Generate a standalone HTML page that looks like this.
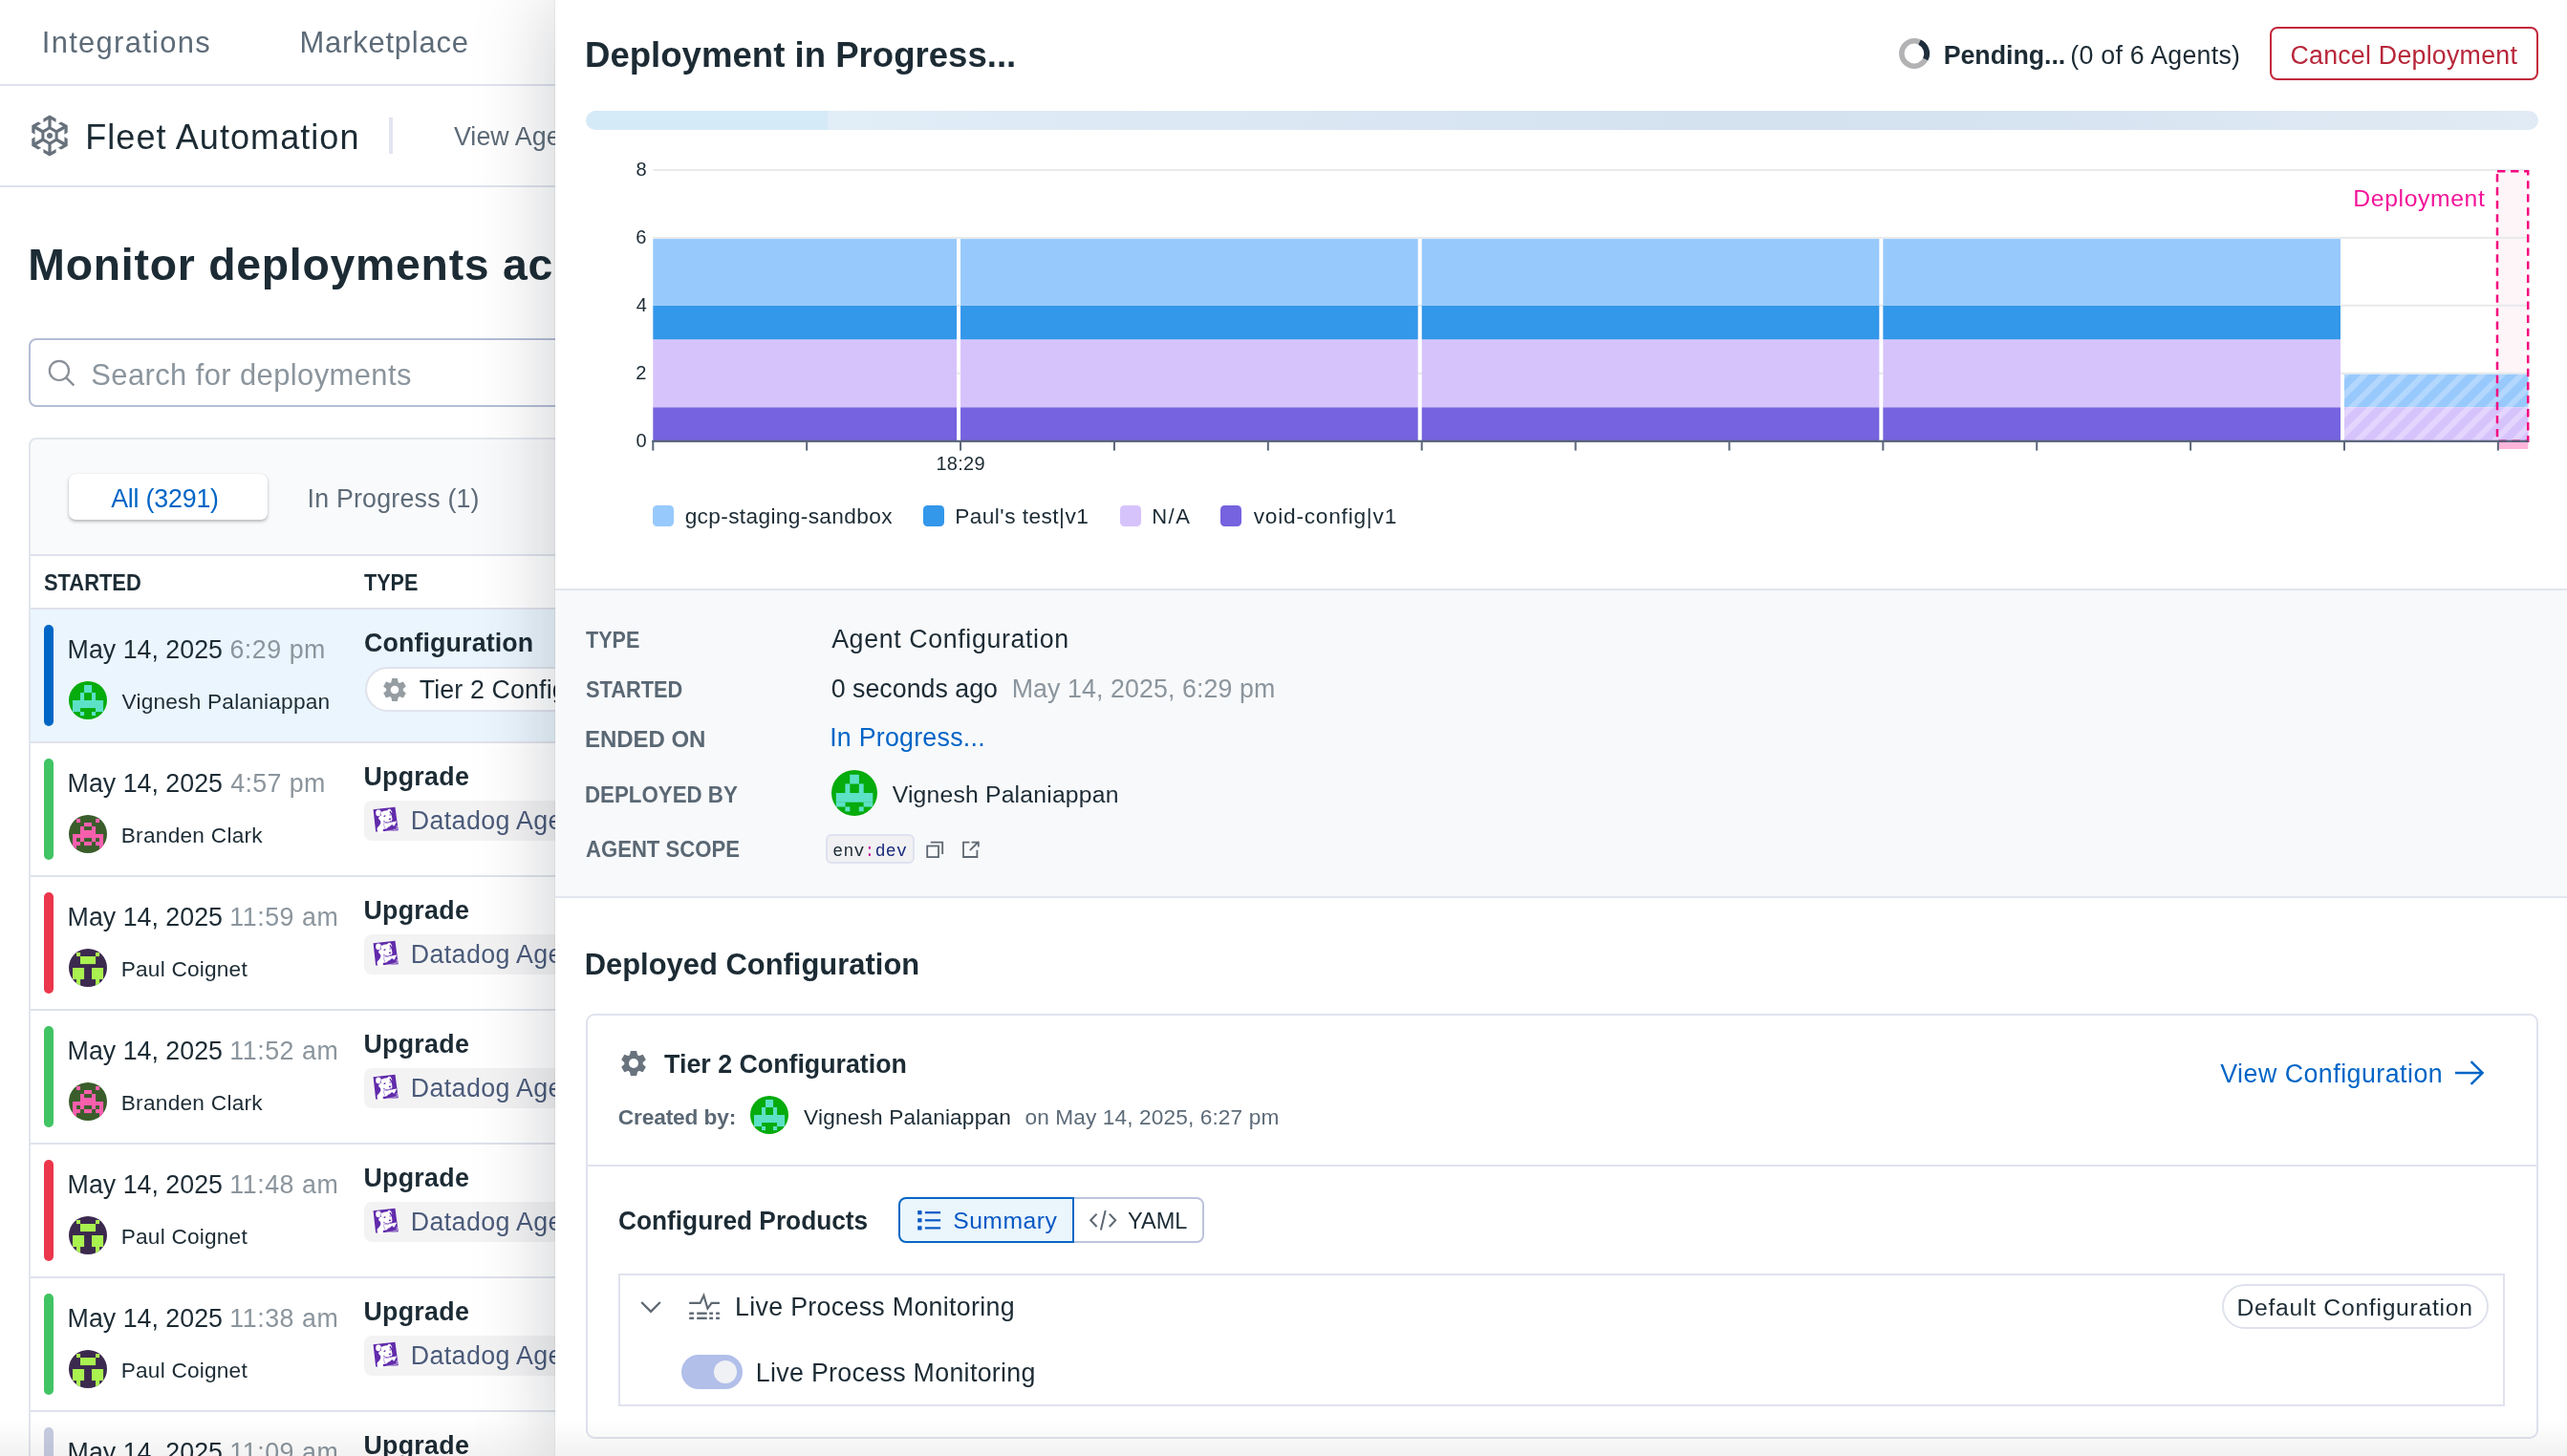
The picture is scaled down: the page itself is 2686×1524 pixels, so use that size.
<!DOCTYPE html>
<html><head><meta charset="utf-8"><title>Fleet Automation</title>
<style>
html,body{margin:0;padding:0;}
body{width:2686px;height:1524px;overflow:hidden;position:relative;background:#fff;font-family:"Liberation Sans",sans-serif;}
.t{position:absolute;white-space:nowrap;}
.b{position:absolute;}
#left{position:absolute;left:0;top:0;width:581px;height:1524px;overflow:hidden;will-change:transform;}
#panel{position:absolute;left:581px;top:0;width:2105px;height:1524px;background:#fff;box-shadow:0 0 80px rgba(8,14,28,.215);}
#pin{position:absolute;left:-581px;top:0;width:2686px;height:1524px;overflow:hidden;clip-path:inset(0 0 0 581px);will-change:transform;}
#fade{position:absolute;left:0;top:1486px;width:2686px;height:38px;background:linear-gradient(180deg,rgba(0,0,0,0),rgba(0,0,0,.05));}
</style></head><body>
<div id="left">
<div class="t" style="left:43.75px;top:29.80px;font-size:30.9px;line-height:30.9px;color:#5d6b78;letter-spacing:1.320px;">Integrations</div>
<div class="t" style="left:313.47px;top:29.80px;font-size:30.9px;line-height:30.9px;color:#5d6b78;letter-spacing:0.821px;">Marketplace</div>
<div class="b" style="left:0px;top:88px;width:700px;height:2px;background:#dfe2ec;"></div>
<svg class="b" style="left:28px;top:118px;" width="48" height="48" viewBox="-24 -24 48 48"><polygon points="0.00,-8.20 7.10,-4.10 7.10,4.10 0.00,8.20 -7.10,4.10 -7.10,-4.10" fill="none" stroke="#67717c" stroke-width="3"/><g transform="rotate(0)"><rect x="-1.6" y="-19" width="3.2" height="11" fill="#67717c"/><polygon points="0,-21.6 6.6,-17.8 6.6,-14 0,-17.8 -6.6,-14 -6.6,-17.8" fill="#67717c"/></g><g transform="rotate(60)"><rect x="-1.6" y="-19" width="3.2" height="11" fill="#67717c"/><polygon points="0,-21.6 6.6,-17.8 6.6,-14 0,-17.8 -6.6,-14 -6.6,-17.8" fill="#67717c"/></g><g transform="rotate(120)"><rect x="-1.6" y="-19" width="3.2" height="11" fill="#67717c"/><polygon points="0,-21.6 6.6,-17.8 6.6,-14 0,-17.8 -6.6,-14 -6.6,-17.8" fill="#67717c"/></g><g transform="rotate(180)"><rect x="-1.6" y="-19" width="3.2" height="11" fill="#67717c"/><polygon points="0,-21.6 6.6,-17.8 6.6,-14 0,-17.8 -6.6,-14 -6.6,-17.8" fill="#67717c"/></g><g transform="rotate(240)"><rect x="-1.6" y="-19" width="3.2" height="11" fill="#67717c"/><polygon points="0,-21.6 6.6,-17.8 6.6,-14 0,-17.8 -6.6,-14 -6.6,-17.8" fill="#67717c"/></g><g transform="rotate(300)"><rect x="-1.6" y="-19" width="3.2" height="11" fill="#67717c"/><polygon points="0,-21.6 6.6,-17.8 6.6,-14 0,-17.8 -6.6,-14 -6.6,-17.8" fill="#67717c"/></g><circle r="3" fill="#67717c"/></svg>
<div class="t" style="left:89.24px;top:125.80px;font-size:36.05px;line-height:36.05px;color:#1c2b34;letter-spacing:1.051px;">Fleet Automation</div>
<div class="b" style="left:407px;top:123px;width:4px;height:38px;background:#e2e5f0;"></div>
<div class="t" style="left:474.88px;top:129.60px;font-size:26.78px;line-height:26.78px;color:#5d6b78;letter-spacing:0.099px;">View Agents</div>
<div class="b" style="left:0px;top:194px;width:700px;height:2px;background:#dfe2ec;"></div>
<div class="t" style="left:29.30px;top:254.00px;font-size:46.35px;line-height:46.35px;color:#1c2b34;font-weight:700;letter-spacing:0.764px;">Monitor deployments account-wide</div>
<div class="b" style="left:30px;top:354px;width:700px;height:72px;box-sizing:border-box;border:2px solid #b4bdd6;border-radius:8px;background:#fff;"></div>
<svg class="b" style="left:48px;top:374px;" width="34" height="34" viewBox="0 0 34 34"><circle cx="13.9" cy="13.9" r="10.1" fill="none" stroke="#8a9099" stroke-width="2.2"/><path d="M21.3,21.3 L29.3,29.3" stroke="#8a9099" stroke-width="2.4"/></svg>
<div class="t" style="left:95.30px;top:377.50px;font-size:30.9px;line-height:30.9px;color:#8b959d;letter-spacing:0.419px;">Search for deployments</div>
<div class="b" style="left:30px;top:458px;width:700px;height:1200px;box-sizing:border-box;border:2px solid #e2e5ee;border-radius:8px;background:#f9fafb;"></div>
<div class="b" style="left:72px;top:496px;width:208px;height:48px;border-radius:7px;background:#fff;box-shadow:0 2px 3.5px rgba(0,0,0,.26),0 0 1px rgba(0,0,0,.14);"></div>
<div class="t" style="left:116.15px;top:508.50px;font-size:26.78px;line-height:26.78px;color:#0065c6;letter-spacing:-0.185px;">All (3291)</div>
<div class="t" style="left:321.53px;top:508.50px;font-size:26.78px;line-height:26.78px;color:#5d6b78;letter-spacing:0.214px;">In Progress (1)</div>
<div class="b" style="left:32px;top:580px;width:700px;height:2px;background:#dfe2ec;"></div>
<div class="b" style="left:32px;top:582px;width:700px;height:54px;background:#fff;"></div>
<div class="t" style="left:45.77px;top:598.30px;font-size:24px;line-height:24px;color:#1c2b34;font-weight:700;transform:scaleX(0.9122);transform-origin:0 0;">STARTED</div>
<div class="t" style="left:381.26px;top:598.30px;font-size:24px;line-height:24px;color:#1c2b34;font-weight:700;transform:scaleX(0.8992);transform-origin:0 0;">TYPE</div>
<div class="b" style="left:32px;top:636px;width:700px;height:2px;background:#dfe2ec;"></div>
<div class="b" style="left:32px;top:638px;width:700px;height:138px;background:#eaf5fd;"></div>
<div class="b" style="left:32px;top:776px;width:700px;height:2px;background:#dfe2ec;"></div>
<div class="b" style="left:46px;top:654px;width:10px;height:106px;background:#0066c6;border-radius:5px;"></div>
<div class="t" style="left:70.60px;top:667.30px;font-size:26.78px;line-height:26.78px;color:#1c2b34;letter-spacing:0.017px;">May 14, 2025</div>
<div class="t" style="left:240.44px;top:667.30px;font-size:26.78px;line-height:26.78px;color:#8b959d;letter-spacing:0.532px;">6:29 pm</div>
<svg class="b" style="left:72px;top:713px;" width="40" height="40" viewBox="0 0 10 10"><defs><clipPath id="avv72713"><circle cx="5" cy="5" r="5"/></clipPath></defs><g clip-path="url(#avv72713)"><rect width="10" height="10" fill="#06ab0c"/><g fill="#5ce1c6"><rect x="4" y="1" width="2.02" height="2.02"/><rect x="3" y="3" width="1.02" height="2.02"/><rect x="6" y="3" width="1.02" height="2.02"/><rect x="1" y="5" width="8.02" height="2.02"/><rect x="1" y="7" width="2.02" height="1.02"/><rect x="7" y="7" width="2.02" height="1.02"/><rect x="3" y="8" width="1.02" height="1.02"/><rect x="6" y="8" width="1.02" height="1.02"/></g></g></svg>
<div class="t" style="left:127.50px;top:723.20px;font-size:22.66px;line-height:22.66px;color:#1c2b34;letter-spacing:0.217px;">Vignesh Palaniappan</div>
<div class="t" style="left:380.90px;top:660.40px;font-size:26.78px;line-height:26.78px;color:#1c2b34;font-weight:700;letter-spacing:0.156px;">Configuration</div>
<div class="b" style="left:382px;top:698.4px;width:400px;height:47px;box-sizing:border-box;border:2px solid #e0e2ec;border-radius:24px;background:#fff;"></div>
<svg class="b" style="left:399px;top:707.9px;" width="28" height="28" viewBox="-14 -14 28 28"><g fill="#959da2"><polygon points="-2.77,-12.00 2.77,-12.00 3.69,-7.66 -3.69,-7.66" transform="rotate(0)"/><polygon points="-2.77,-12.00 2.77,-12.00 3.69,-7.66 -3.69,-7.66" transform="rotate(60)"/><polygon points="-2.77,-12.00 2.77,-12.00 3.69,-7.66 -3.69,-7.66" transform="rotate(120)"/><polygon points="-2.77,-12.00 2.77,-12.00 3.69,-7.66 -3.69,-7.66" transform="rotate(180)"/><polygon points="-2.77,-12.00 2.77,-12.00 3.69,-7.66 -3.69,-7.66" transform="rotate(240)"/><polygon points="-2.77,-12.00 2.77,-12.00 3.69,-7.66 -3.69,-7.66" transform="rotate(300)"/><circle r="8.86"/></g><circle r="4.34" fill="#fff"/></svg>
<div class="t" style="left:438.70px;top:708.80px;font-size:26.78px;line-height:26.78px;color:#1c2b34;letter-spacing:0.141px;">Tier 2 Configuration</div>
<div class="b" style="left:32px;top:778px;width:700px;height:138px;background:#fff;"></div>
<div class="b" style="left:32px;top:916px;width:700px;height:2px;background:#dfe2ec;"></div>
<div class="b" style="left:46px;top:794px;width:10px;height:106px;background:#41c464;border-radius:5px;"></div>
<div class="t" style="left:70.60px;top:807.30px;font-size:26.78px;line-height:26.78px;color:#1c2b34;letter-spacing:0.017px;">May 14, 2025</div>
<div class="t" style="left:241.19px;top:807.30px;font-size:26.78px;line-height:26.78px;color:#8b959d;letter-spacing:0.408px;">4:57 pm</div>
<svg class="b" style="left:72px;top:853px;" width="40" height="40" viewBox="0 0 10 10"><defs><clipPath id="avb72853"><circle cx="5" cy="5" r="5"/></clipPath></defs><g clip-path="url(#avb72853)"><rect width="10" height="10" fill="#3a5d2b"/><g fill="#f75fad"><rect x="2" y="1" width="1.02" height="1.02"/><rect x="7" y="1" width="1.02" height="1.02"/><rect x="4" y="2" width="2.02" height="1.02"/><rect x="3" y="3" width="1.02" height="1.02"/><rect x="6" y="3" width="1.02" height="1.02"/><rect x="3" y="4" width="4.02" height="1.02"/><rect x="1" y="5" width="8.02" height="1.02"/><rect x="1" y="6" width="1.02" height="1.02"/><rect x="3" y="6" width="1.02" height="1.02"/><rect x="6" y="6" width="1.02" height="1.02"/><rect x="8" y="6" width="1.02" height="1.02"/><rect x="1" y="7" width="2.02" height="1.02"/><rect x="4" y="7" width="2.02" height="1.02"/><rect x="7" y="7" width="2.02" height="1.02"/><rect x="1" y="8" width="1.02" height="1.02"/><rect x="8" y="8" width="1.02" height="1.02"/></g></g></svg>
<div class="t" style="left:126.74px;top:863.20px;font-size:22.66px;line-height:22.66px;color:#1c2b34;letter-spacing:0.262px;">Branden Clark</div>
<div class="t" style="left:380.39px;top:800.40px;font-size:26.78px;line-height:26.78px;color:#1c2b34;font-weight:700;letter-spacing:0.310px;">Upgrade</div>
<div class="b" style="left:381px;top:838px;width:400px;height:42px;border-radius:8px;background:#f3f3f4;"></div>
<svg class="b" style="left:389.9px;top:843.9px;" width="28" height="30" viewBox="0 0 28 30"><polygon points="0.57,3.37 23.46,0.69 26.73,25.32 3.14,26.38" fill="#612bab"/><g fill="#fff"><ellipse cx="5.95" cy="6.9" rx="2.75" ry="3.3"/><polygon points="8.74,5.24 9.91,5.66 11.55,4.66 15.28,4.26 16.45,3.09 17.43,2.72 18.90,3.56 20.47,6.53 19.72,6.83 18.67,5.12 17.73,4.66 17.73,6.64 18.90,7.81 19.77,9.68 20.23,11.78 20.47,13.65 20.00,15.10 18.83,16.03 17.15,17.03 14.82,17.34 12.95,16.92 12.13,17.62 11.78,19.95 12.95,22.99 13.88,23.69 11.08,23.69 10.85,25.79 10.38,27.66 8.74,28.01 6.88,27.43 5.24,26.49 4.54,24.62 4.77,22.29 6.88,20.19 8.39,17.62 8.16,15.28 5.94,12.71 6.88,10.61 8.74,9.68"/><polygon points="12.13,17.15 14.35,17.38 17.62,17.10 24.62,15.56 24.97,16.10 22.99,19.72 22.17,20.65 20.19,19.07 19.02,20.07 17.62,21.35 16.10,21.71 14.58,23.46 12.95,22.99 11.78,19.95"/></g><ellipse cx="12.5" cy="10.15" rx="1.15" ry="0.75" fill="#612bab" transform="rotate(-30 12.5 10.15)"/><ellipse cx="18.1" cy="9" rx="0.6" ry="0.75" fill="#612bab"/><ellipse cx="18.1" cy="13.2" rx="1.3" ry="0.75" fill="#612bab" transform="rotate(-8 18.1 13.2)"/><polyline points="11.08,15.05 13.41,16.45 15.98,17.03 17.62,16.22 18.67,15.40" fill="none" stroke="#612bab" stroke-width="0.75"/><polyline points="8.04,6.88 8.09,9.68" fill="none" stroke="#612bab" stroke-width="0.6" opacity="0.7"/><polyline points="11.90,16.22 11.55,19.02 12.48,22.29" fill="none" stroke="#612bab" stroke-width="0.55" opacity="0.6"/><polyline points="18.0,13.9 18.3,15.6" fill="none" stroke="#612bab" stroke-width="0.5" opacity="0.7"/><polyline points="24.97,19.95 25.37,23.97 21.35,24.44" fill="none" stroke="#fff" stroke-width="0.7" opacity="0.85"/><polyline points="20.89,24.97 13.41,26.26" fill="none" stroke="#fff" stroke-width="0.7" opacity="0.7"/></svg>
<div class="t" style="left:429.80px;top:845.70px;font-size:26.78px;line-height:26.78px;color:#4b5b7a;letter-spacing:0.389px;">Datadog Agent</div>
<div class="b" style="left:32px;top:918px;width:700px;height:138px;background:#fff;"></div>
<div class="b" style="left:32px;top:1056px;width:700px;height:2px;background:#dfe2ec;"></div>
<div class="b" style="left:46px;top:934px;width:10px;height:106px;background:#eb364b;border-radius:5px;"></div>
<div class="t" style="left:70.60px;top:947.30px;font-size:26.78px;line-height:26.78px;color:#1c2b34;letter-spacing:0.017px;">May 14, 2025</div>
<div class="t" style="left:240.26px;top:947.30px;font-size:26.78px;line-height:26.78px;color:#8b959d;letter-spacing:0.552px;">11:59 am</div>
<svg class="b" style="left:72px;top:993px;" width="40" height="40" viewBox="0 0 10 10"><defs><clipPath id="avp72993"><circle cx="5" cy="5" r="5"/></clipPath></defs><g clip-path="url(#avp72993)"><rect width="10" height="10" fill="#3c294e"/><g fill="#a9f250"><rect x="2" y="1" width="1.02" height="1.02"/><rect x="7" y="1" width="1.02" height="1.02"/><rect x="3" y="2" width="4.02" height="2.02"/><rect x="1" y="5" width="3.02" height="3.02"/><rect x="6" y="5" width="3.02" height="3.02"/><rect x="2" y="8" width="1.02" height="2.02"/><rect x="7" y="8" width="1.02" height="2.02"/></g></g></svg>
<div class="t" style="left:126.74px;top:1003.20px;font-size:22.66px;line-height:22.66px;color:#1c2b34;letter-spacing:0.203px;">Paul Coignet</div>
<div class="t" style="left:380.39px;top:940.40px;font-size:26.78px;line-height:26.78px;color:#1c2b34;font-weight:700;letter-spacing:0.310px;">Upgrade</div>
<div class="b" style="left:381px;top:978px;width:400px;height:42px;border-radius:8px;background:#f3f3f4;"></div>
<svg class="b" style="left:389.9px;top:983.9px;" width="28" height="30" viewBox="0 0 28 30"><polygon points="0.57,3.37 23.46,0.69 26.73,25.32 3.14,26.38" fill="#612bab"/><g fill="#fff"><ellipse cx="5.95" cy="6.9" rx="2.75" ry="3.3"/><polygon points="8.74,5.24 9.91,5.66 11.55,4.66 15.28,4.26 16.45,3.09 17.43,2.72 18.90,3.56 20.47,6.53 19.72,6.83 18.67,5.12 17.73,4.66 17.73,6.64 18.90,7.81 19.77,9.68 20.23,11.78 20.47,13.65 20.00,15.10 18.83,16.03 17.15,17.03 14.82,17.34 12.95,16.92 12.13,17.62 11.78,19.95 12.95,22.99 13.88,23.69 11.08,23.69 10.85,25.79 10.38,27.66 8.74,28.01 6.88,27.43 5.24,26.49 4.54,24.62 4.77,22.29 6.88,20.19 8.39,17.62 8.16,15.28 5.94,12.71 6.88,10.61 8.74,9.68"/><polygon points="12.13,17.15 14.35,17.38 17.62,17.10 24.62,15.56 24.97,16.10 22.99,19.72 22.17,20.65 20.19,19.07 19.02,20.07 17.62,21.35 16.10,21.71 14.58,23.46 12.95,22.99 11.78,19.95"/></g><ellipse cx="12.5" cy="10.15" rx="1.15" ry="0.75" fill="#612bab" transform="rotate(-30 12.5 10.15)"/><ellipse cx="18.1" cy="9" rx="0.6" ry="0.75" fill="#612bab"/><ellipse cx="18.1" cy="13.2" rx="1.3" ry="0.75" fill="#612bab" transform="rotate(-8 18.1 13.2)"/><polyline points="11.08,15.05 13.41,16.45 15.98,17.03 17.62,16.22 18.67,15.40" fill="none" stroke="#612bab" stroke-width="0.75"/><polyline points="8.04,6.88 8.09,9.68" fill="none" stroke="#612bab" stroke-width="0.6" opacity="0.7"/><polyline points="11.90,16.22 11.55,19.02 12.48,22.29" fill="none" stroke="#612bab" stroke-width="0.55" opacity="0.6"/><polyline points="18.0,13.9 18.3,15.6" fill="none" stroke="#612bab" stroke-width="0.5" opacity="0.7"/><polyline points="24.97,19.95 25.37,23.97 21.35,24.44" fill="none" stroke="#fff" stroke-width="0.7" opacity="0.85"/><polyline points="20.89,24.97 13.41,26.26" fill="none" stroke="#fff" stroke-width="0.7" opacity="0.7"/></svg>
<div class="t" style="left:429.80px;top:985.70px;font-size:26.78px;line-height:26.78px;color:#4b5b7a;letter-spacing:0.389px;">Datadog Agent</div>
<div class="b" style="left:32px;top:1058px;width:700px;height:138px;background:#fff;"></div>
<div class="b" style="left:32px;top:1196px;width:700px;height:2px;background:#dfe2ec;"></div>
<div class="b" style="left:46px;top:1074px;width:10px;height:106px;background:#41c464;border-radius:5px;"></div>
<div class="t" style="left:70.60px;top:1087.30px;font-size:26.78px;line-height:26.78px;color:#1c2b34;letter-spacing:0.017px;">May 14, 2025</div>
<div class="t" style="left:240.26px;top:1087.30px;font-size:26.78px;line-height:26.78px;color:#8b959d;letter-spacing:0.552px;">11:52 am</div>
<svg class="b" style="left:72px;top:1133px;" width="40" height="40" viewBox="0 0 10 10"><defs><clipPath id="avb721133"><circle cx="5" cy="5" r="5"/></clipPath></defs><g clip-path="url(#avb721133)"><rect width="10" height="10" fill="#3a5d2b"/><g fill="#f75fad"><rect x="2" y="1" width="1.02" height="1.02"/><rect x="7" y="1" width="1.02" height="1.02"/><rect x="4" y="2" width="2.02" height="1.02"/><rect x="3" y="3" width="1.02" height="1.02"/><rect x="6" y="3" width="1.02" height="1.02"/><rect x="3" y="4" width="4.02" height="1.02"/><rect x="1" y="5" width="8.02" height="1.02"/><rect x="1" y="6" width="1.02" height="1.02"/><rect x="3" y="6" width="1.02" height="1.02"/><rect x="6" y="6" width="1.02" height="1.02"/><rect x="8" y="6" width="1.02" height="1.02"/><rect x="1" y="7" width="2.02" height="1.02"/><rect x="4" y="7" width="2.02" height="1.02"/><rect x="7" y="7" width="2.02" height="1.02"/><rect x="1" y="8" width="1.02" height="1.02"/><rect x="8" y="8" width="1.02" height="1.02"/></g></g></svg>
<div class="t" style="left:126.74px;top:1143.20px;font-size:22.66px;line-height:22.66px;color:#1c2b34;letter-spacing:0.262px;">Branden Clark</div>
<div class="t" style="left:380.39px;top:1080.40px;font-size:26.78px;line-height:26.78px;color:#1c2b34;font-weight:700;letter-spacing:0.310px;">Upgrade</div>
<div class="b" style="left:381px;top:1118px;width:400px;height:42px;border-radius:8px;background:#f3f3f4;"></div>
<svg class="b" style="left:389.9px;top:1123.9px;" width="28" height="30" viewBox="0 0 28 30"><polygon points="0.57,3.37 23.46,0.69 26.73,25.32 3.14,26.38" fill="#612bab"/><g fill="#fff"><ellipse cx="5.95" cy="6.9" rx="2.75" ry="3.3"/><polygon points="8.74,5.24 9.91,5.66 11.55,4.66 15.28,4.26 16.45,3.09 17.43,2.72 18.90,3.56 20.47,6.53 19.72,6.83 18.67,5.12 17.73,4.66 17.73,6.64 18.90,7.81 19.77,9.68 20.23,11.78 20.47,13.65 20.00,15.10 18.83,16.03 17.15,17.03 14.82,17.34 12.95,16.92 12.13,17.62 11.78,19.95 12.95,22.99 13.88,23.69 11.08,23.69 10.85,25.79 10.38,27.66 8.74,28.01 6.88,27.43 5.24,26.49 4.54,24.62 4.77,22.29 6.88,20.19 8.39,17.62 8.16,15.28 5.94,12.71 6.88,10.61 8.74,9.68"/><polygon points="12.13,17.15 14.35,17.38 17.62,17.10 24.62,15.56 24.97,16.10 22.99,19.72 22.17,20.65 20.19,19.07 19.02,20.07 17.62,21.35 16.10,21.71 14.58,23.46 12.95,22.99 11.78,19.95"/></g><ellipse cx="12.5" cy="10.15" rx="1.15" ry="0.75" fill="#612bab" transform="rotate(-30 12.5 10.15)"/><ellipse cx="18.1" cy="9" rx="0.6" ry="0.75" fill="#612bab"/><ellipse cx="18.1" cy="13.2" rx="1.3" ry="0.75" fill="#612bab" transform="rotate(-8 18.1 13.2)"/><polyline points="11.08,15.05 13.41,16.45 15.98,17.03 17.62,16.22 18.67,15.40" fill="none" stroke="#612bab" stroke-width="0.75"/><polyline points="8.04,6.88 8.09,9.68" fill="none" stroke="#612bab" stroke-width="0.6" opacity="0.7"/><polyline points="11.90,16.22 11.55,19.02 12.48,22.29" fill="none" stroke="#612bab" stroke-width="0.55" opacity="0.6"/><polyline points="18.0,13.9 18.3,15.6" fill="none" stroke="#612bab" stroke-width="0.5" opacity="0.7"/><polyline points="24.97,19.95 25.37,23.97 21.35,24.44" fill="none" stroke="#fff" stroke-width="0.7" opacity="0.85"/><polyline points="20.89,24.97 13.41,26.26" fill="none" stroke="#fff" stroke-width="0.7" opacity="0.7"/></svg>
<div class="t" style="left:429.80px;top:1125.70px;font-size:26.78px;line-height:26.78px;color:#4b5b7a;letter-spacing:0.389px;">Datadog Agent</div>
<div class="b" style="left:32px;top:1198px;width:700px;height:138px;background:#fff;"></div>
<div class="b" style="left:32px;top:1336px;width:700px;height:2px;background:#dfe2ec;"></div>
<div class="b" style="left:46px;top:1214px;width:10px;height:106px;background:#eb364b;border-radius:5px;"></div>
<div class="t" style="left:70.60px;top:1227.30px;font-size:26.78px;line-height:26.78px;color:#1c2b34;letter-spacing:0.017px;">May 14, 2025</div>
<div class="t" style="left:240.26px;top:1227.30px;font-size:26.78px;line-height:26.78px;color:#8b959d;letter-spacing:0.552px;">11:48 am</div>
<svg class="b" style="left:72px;top:1273px;" width="40" height="40" viewBox="0 0 10 10"><defs><clipPath id="avp721273"><circle cx="5" cy="5" r="5"/></clipPath></defs><g clip-path="url(#avp721273)"><rect width="10" height="10" fill="#3c294e"/><g fill="#a9f250"><rect x="2" y="1" width="1.02" height="1.02"/><rect x="7" y="1" width="1.02" height="1.02"/><rect x="3" y="2" width="4.02" height="2.02"/><rect x="1" y="5" width="3.02" height="3.02"/><rect x="6" y="5" width="3.02" height="3.02"/><rect x="2" y="8" width="1.02" height="2.02"/><rect x="7" y="8" width="1.02" height="2.02"/></g></g></svg>
<div class="t" style="left:126.74px;top:1283.20px;font-size:22.66px;line-height:22.66px;color:#1c2b34;letter-spacing:0.203px;">Paul Coignet</div>
<div class="t" style="left:380.39px;top:1220.40px;font-size:26.78px;line-height:26.78px;color:#1c2b34;font-weight:700;letter-spacing:0.310px;">Upgrade</div>
<div class="b" style="left:381px;top:1258px;width:400px;height:42px;border-radius:8px;background:#f3f3f4;"></div>
<svg class="b" style="left:389.9px;top:1263.9px;" width="28" height="30" viewBox="0 0 28 30"><polygon points="0.57,3.37 23.46,0.69 26.73,25.32 3.14,26.38" fill="#612bab"/><g fill="#fff"><ellipse cx="5.95" cy="6.9" rx="2.75" ry="3.3"/><polygon points="8.74,5.24 9.91,5.66 11.55,4.66 15.28,4.26 16.45,3.09 17.43,2.72 18.90,3.56 20.47,6.53 19.72,6.83 18.67,5.12 17.73,4.66 17.73,6.64 18.90,7.81 19.77,9.68 20.23,11.78 20.47,13.65 20.00,15.10 18.83,16.03 17.15,17.03 14.82,17.34 12.95,16.92 12.13,17.62 11.78,19.95 12.95,22.99 13.88,23.69 11.08,23.69 10.85,25.79 10.38,27.66 8.74,28.01 6.88,27.43 5.24,26.49 4.54,24.62 4.77,22.29 6.88,20.19 8.39,17.62 8.16,15.28 5.94,12.71 6.88,10.61 8.74,9.68"/><polygon points="12.13,17.15 14.35,17.38 17.62,17.10 24.62,15.56 24.97,16.10 22.99,19.72 22.17,20.65 20.19,19.07 19.02,20.07 17.62,21.35 16.10,21.71 14.58,23.46 12.95,22.99 11.78,19.95"/></g><ellipse cx="12.5" cy="10.15" rx="1.15" ry="0.75" fill="#612bab" transform="rotate(-30 12.5 10.15)"/><ellipse cx="18.1" cy="9" rx="0.6" ry="0.75" fill="#612bab"/><ellipse cx="18.1" cy="13.2" rx="1.3" ry="0.75" fill="#612bab" transform="rotate(-8 18.1 13.2)"/><polyline points="11.08,15.05 13.41,16.45 15.98,17.03 17.62,16.22 18.67,15.40" fill="none" stroke="#612bab" stroke-width="0.75"/><polyline points="8.04,6.88 8.09,9.68" fill="none" stroke="#612bab" stroke-width="0.6" opacity="0.7"/><polyline points="11.90,16.22 11.55,19.02 12.48,22.29" fill="none" stroke="#612bab" stroke-width="0.55" opacity="0.6"/><polyline points="18.0,13.9 18.3,15.6" fill="none" stroke="#612bab" stroke-width="0.5" opacity="0.7"/><polyline points="24.97,19.95 25.37,23.97 21.35,24.44" fill="none" stroke="#fff" stroke-width="0.7" opacity="0.85"/><polyline points="20.89,24.97 13.41,26.26" fill="none" stroke="#fff" stroke-width="0.7" opacity="0.7"/></svg>
<div class="t" style="left:429.80px;top:1265.70px;font-size:26.78px;line-height:26.78px;color:#4b5b7a;letter-spacing:0.389px;">Datadog Agent</div>
<div class="b" style="left:32px;top:1338px;width:700px;height:138px;background:#fff;"></div>
<div class="b" style="left:32px;top:1476px;width:700px;height:2px;background:#dfe2ec;"></div>
<div class="b" style="left:46px;top:1354px;width:10px;height:106px;background:#41c464;border-radius:5px;"></div>
<div class="t" style="left:70.60px;top:1367.30px;font-size:26.78px;line-height:26.78px;color:#1c2b34;letter-spacing:0.017px;">May 14, 2025</div>
<div class="t" style="left:240.26px;top:1367.30px;font-size:26.78px;line-height:26.78px;color:#8b959d;letter-spacing:0.552px;">11:38 am</div>
<svg class="b" style="left:72px;top:1413px;" width="40" height="40" viewBox="0 0 10 10"><defs><clipPath id="avp721413"><circle cx="5" cy="5" r="5"/></clipPath></defs><g clip-path="url(#avp721413)"><rect width="10" height="10" fill="#3c294e"/><g fill="#a9f250"><rect x="2" y="1" width="1.02" height="1.02"/><rect x="7" y="1" width="1.02" height="1.02"/><rect x="3" y="2" width="4.02" height="2.02"/><rect x="1" y="5" width="3.02" height="3.02"/><rect x="6" y="5" width="3.02" height="3.02"/><rect x="2" y="8" width="1.02" height="2.02"/><rect x="7" y="8" width="1.02" height="2.02"/></g></g></svg>
<div class="t" style="left:126.74px;top:1423.20px;font-size:22.66px;line-height:22.66px;color:#1c2b34;letter-spacing:0.203px;">Paul Coignet</div>
<div class="t" style="left:380.39px;top:1360.40px;font-size:26.78px;line-height:26.78px;color:#1c2b34;font-weight:700;letter-spacing:0.310px;">Upgrade</div>
<div class="b" style="left:381px;top:1398px;width:400px;height:42px;border-radius:8px;background:#f3f3f4;"></div>
<svg class="b" style="left:389.9px;top:1403.9px;" width="28" height="30" viewBox="0 0 28 30"><polygon points="0.57,3.37 23.46,0.69 26.73,25.32 3.14,26.38" fill="#612bab"/><g fill="#fff"><ellipse cx="5.95" cy="6.9" rx="2.75" ry="3.3"/><polygon points="8.74,5.24 9.91,5.66 11.55,4.66 15.28,4.26 16.45,3.09 17.43,2.72 18.90,3.56 20.47,6.53 19.72,6.83 18.67,5.12 17.73,4.66 17.73,6.64 18.90,7.81 19.77,9.68 20.23,11.78 20.47,13.65 20.00,15.10 18.83,16.03 17.15,17.03 14.82,17.34 12.95,16.92 12.13,17.62 11.78,19.95 12.95,22.99 13.88,23.69 11.08,23.69 10.85,25.79 10.38,27.66 8.74,28.01 6.88,27.43 5.24,26.49 4.54,24.62 4.77,22.29 6.88,20.19 8.39,17.62 8.16,15.28 5.94,12.71 6.88,10.61 8.74,9.68"/><polygon points="12.13,17.15 14.35,17.38 17.62,17.10 24.62,15.56 24.97,16.10 22.99,19.72 22.17,20.65 20.19,19.07 19.02,20.07 17.62,21.35 16.10,21.71 14.58,23.46 12.95,22.99 11.78,19.95"/></g><ellipse cx="12.5" cy="10.15" rx="1.15" ry="0.75" fill="#612bab" transform="rotate(-30 12.5 10.15)"/><ellipse cx="18.1" cy="9" rx="0.6" ry="0.75" fill="#612bab"/><ellipse cx="18.1" cy="13.2" rx="1.3" ry="0.75" fill="#612bab" transform="rotate(-8 18.1 13.2)"/><polyline points="11.08,15.05 13.41,16.45 15.98,17.03 17.62,16.22 18.67,15.40" fill="none" stroke="#612bab" stroke-width="0.75"/><polyline points="8.04,6.88 8.09,9.68" fill="none" stroke="#612bab" stroke-width="0.6" opacity="0.7"/><polyline points="11.90,16.22 11.55,19.02 12.48,22.29" fill="none" stroke="#612bab" stroke-width="0.55" opacity="0.6"/><polyline points="18.0,13.9 18.3,15.6" fill="none" stroke="#612bab" stroke-width="0.5" opacity="0.7"/><polyline points="24.97,19.95 25.37,23.97 21.35,24.44" fill="none" stroke="#fff" stroke-width="0.7" opacity="0.85"/><polyline points="20.89,24.97 13.41,26.26" fill="none" stroke="#fff" stroke-width="0.7" opacity="0.7"/></svg>
<div class="t" style="left:429.80px;top:1405.70px;font-size:26.78px;line-height:26.78px;color:#4b5b7a;letter-spacing:0.389px;">Datadog Agent</div>
<div class="b" style="left:32px;top:1478px;width:700px;height:138px;background:#fff;"></div>
<div class="b" style="left:32px;top:1616px;width:700px;height:2px;background:#dfe2ec;"></div>
<div class="b" style="left:46px;top:1494px;width:10px;height:106px;background:#c8cde2;border-radius:5px;"></div>
<div class="t" style="left:70.60px;top:1507.30px;font-size:26.78px;line-height:26.78px;color:#1c2b34;letter-spacing:0.017px;">May 14, 2025</div>
<div class="t" style="left:240.26px;top:1507.30px;font-size:26.78px;line-height:26.78px;color:#8b959d;letter-spacing:0.552px;">11:09 am</div>
<svg class="b" style="left:72px;top:1553px;" width="40" height="40" viewBox="0 0 10 10"><defs><clipPath id="avp721553"><circle cx="5" cy="5" r="5"/></clipPath></defs><g clip-path="url(#avp721553)"><rect width="10" height="10" fill="#3c294e"/><g fill="#a9f250"><rect x="2" y="1" width="1.02" height="1.02"/><rect x="7" y="1" width="1.02" height="1.02"/><rect x="3" y="2" width="4.02" height="2.02"/><rect x="1" y="5" width="3.02" height="3.02"/><rect x="6" y="5" width="3.02" height="3.02"/><rect x="2" y="8" width="1.02" height="2.02"/><rect x="7" y="8" width="1.02" height="2.02"/></g></g></svg>
<div class="t" style="left:126.74px;top:1563.20px;font-size:22.66px;line-height:22.66px;color:#1c2b34;letter-spacing:0.203px;">Paul Coignet</div>
<div class="t" style="left:380.39px;top:1500.40px;font-size:26.78px;line-height:26.78px;color:#1c2b34;font-weight:700;letter-spacing:0.310px;">Upgrade</div>
<div class="b" style="left:381px;top:1538px;width:400px;height:42px;border-radius:8px;background:#f3f3f4;"></div>
<svg class="b" style="left:389.9px;top:1543.9px;" width="28" height="30" viewBox="0 0 28 30"><polygon points="0.57,3.37 23.46,0.69 26.73,25.32 3.14,26.38" fill="#612bab"/><g fill="#fff"><ellipse cx="5.95" cy="6.9" rx="2.75" ry="3.3"/><polygon points="8.74,5.24 9.91,5.66 11.55,4.66 15.28,4.26 16.45,3.09 17.43,2.72 18.90,3.56 20.47,6.53 19.72,6.83 18.67,5.12 17.73,4.66 17.73,6.64 18.90,7.81 19.77,9.68 20.23,11.78 20.47,13.65 20.00,15.10 18.83,16.03 17.15,17.03 14.82,17.34 12.95,16.92 12.13,17.62 11.78,19.95 12.95,22.99 13.88,23.69 11.08,23.69 10.85,25.79 10.38,27.66 8.74,28.01 6.88,27.43 5.24,26.49 4.54,24.62 4.77,22.29 6.88,20.19 8.39,17.62 8.16,15.28 5.94,12.71 6.88,10.61 8.74,9.68"/><polygon points="12.13,17.15 14.35,17.38 17.62,17.10 24.62,15.56 24.97,16.10 22.99,19.72 22.17,20.65 20.19,19.07 19.02,20.07 17.62,21.35 16.10,21.71 14.58,23.46 12.95,22.99 11.78,19.95"/></g><ellipse cx="12.5" cy="10.15" rx="1.15" ry="0.75" fill="#612bab" transform="rotate(-30 12.5 10.15)"/><ellipse cx="18.1" cy="9" rx="0.6" ry="0.75" fill="#612bab"/><ellipse cx="18.1" cy="13.2" rx="1.3" ry="0.75" fill="#612bab" transform="rotate(-8 18.1 13.2)"/><polyline points="11.08,15.05 13.41,16.45 15.98,17.03 17.62,16.22 18.67,15.40" fill="none" stroke="#612bab" stroke-width="0.75"/><polyline points="8.04,6.88 8.09,9.68" fill="none" stroke="#612bab" stroke-width="0.6" opacity="0.7"/><polyline points="11.90,16.22 11.55,19.02 12.48,22.29" fill="none" stroke="#612bab" stroke-width="0.55" opacity="0.6"/><polyline points="18.0,13.9 18.3,15.6" fill="none" stroke="#612bab" stroke-width="0.5" opacity="0.7"/><polyline points="24.97,19.95 25.37,23.97 21.35,24.44" fill="none" stroke="#fff" stroke-width="0.7" opacity="0.85"/><polyline points="20.89,24.97 13.41,26.26" fill="none" stroke="#fff" stroke-width="0.7" opacity="0.7"/></svg>
<div class="t" style="left:429.80px;top:1545.70px;font-size:26.78px;line-height:26.78px;color:#4b5b7a;letter-spacing:0.389px;">Datadog Agent</div>
</div>
<div id="panel"><div id="pin">
<div class="t" style="left:612.15px;top:38.80px;font-size:37.08px;line-height:37.08px;color:#1c2b34;font-weight:700;transform:scaleX(0.9865);transform-origin:0 0;">Deployment in Progress...</div>
<svg class="b" style="left:1983px;top:35.8px;" width="40" height="40" viewBox="1983 35.8 40 40"><circle cx="2003" cy="55.8" r="13.2" fill="none" stroke="#b3b3b5" stroke-width="5.6"/><path d="M2008.58,43.84 A13.2,13.2 0 0 1 2014.76,61.79" fill="none" stroke="#1f2e3a" stroke-width="5.8"/></svg>
<div class="t" style="left:2033.71px;top:44.50px;font-size:26.78px;line-height:26.78px;color:#1c2b34;font-weight:700;letter-spacing:-0.038px;">Pending...</div>
<div class="t" style="left:2166.24px;top:44.50px;font-size:26.78px;line-height:26.78px;color:#1c2b34;letter-spacing:0.265px;">(0 of 6 Agents)</div>
<div class="b" style="left:2375px;top:28px;width:281px;height:56px;box-sizing:border-box;border:2px solid #c2283c;border-radius:8px;background:#fff;"></div>
<div class="t" style="left:2396.44px;top:44.50px;font-size:26.78px;line-height:26.78px;color:#b8273a;letter-spacing:0.238px;">Cancel Deployment</div>
<div class="b" style="left:613px;top:116px;width:2042.6px;height:20px;border-radius:10px;background:linear-gradient(90deg,#d5eaf7 0,#d5eaf7 253px,#e1edf7 253px,#d4e1ef 1200px,#d6e3f0 1500px,#e1ebf5 2042px);"></div>
<svg class="b" style="left:581px;top:150px" width="2105" height="360" viewBox="581 150 2105 360"><defs><pattern id="hb" width="14.5" height="14.5" patternUnits="userSpaceOnUse" patternTransform="translate(-8.5,0) rotate(-45)"><rect width="14.5" height="14.5" fill="#97c9fc"/><rect y="0" width="14.5" height="6" fill="#b3d7fd"/></pattern><pattern id="hl" width="14.5" height="14.5" patternUnits="userSpaceOnUse" patternTransform="translate(-8.5,0) rotate(-45)"><rect width="14.5" height="14.5" fill="#d7c3fc"/><rect y="0" width="14.5" height="6" fill="#e3d5fd"/></pattern></defs><rect x="2613" y="179" width="31.6" height="282.70" fill="#fdf5f8"/><rect x="683.3" y="389.76" width="1962.30" height="2" fill="#e7e9eb"/><rect x="683.3" y="318.82" width="1962.30" height="2" fill="#e7e9eb"/><rect x="683.3" y="247.88" width="1962.30" height="2" fill="#e7e9eb"/><rect x="683.3" y="176.94" width="1962.30" height="2" fill="#e7e9eb"/><rect x="683.30" y="426.23" width="317.76" height="35.47" fill="#7563df"/><rect x="683.30" y="355.29" width="317.76" height="70.94" fill="#d7c3fc"/><rect x="683.30" y="319.82" width="317.76" height="35.47" fill="#3397ea"/><rect x="683.30" y="250.08" width="317.76" height="69.74" fill="#97c9fc"/><rect x="1005.06" y="426.23" width="478.64" height="35.47" fill="#7563df"/><rect x="1005.06" y="355.29" width="478.64" height="70.94" fill="#d7c3fc"/><rect x="1005.06" y="319.82" width="478.64" height="35.47" fill="#3397ea"/><rect x="1005.06" y="250.08" width="478.64" height="69.74" fill="#97c9fc"/><rect x="1487.70" y="426.23" width="478.64" height="35.47" fill="#7563df"/><rect x="1487.70" y="355.29" width="478.64" height="70.94" fill="#d7c3fc"/><rect x="1487.70" y="319.82" width="478.64" height="35.47" fill="#3397ea"/><rect x="1487.70" y="250.08" width="478.64" height="69.74" fill="#97c9fc"/><rect x="1970.34" y="426.23" width="478.64" height="35.47" fill="#7563df"/><rect x="1970.34" y="355.29" width="478.64" height="70.94" fill="#d7c3fc"/><rect x="1970.34" y="319.82" width="478.64" height="35.47" fill="#3397ea"/><rect x="1970.34" y="250.08" width="478.64" height="69.74" fill="#97c9fc"/><rect x="2452.98" y="391.76" width="192.62" height="34.47" fill="url(#hb)"/><rect x="2452.98" y="426.23" width="192.62" height="35.47" fill="url(#hl)"/><rect x="2613" y="179.2" width="32.2" height="282.50" fill="none" stroke="#f3067f" stroke-width="2.5" stroke-dasharray="8.4 5.65"/><rect x="2614.3" y="463" width="31" height="7" fill="#ffb5da"/><rect x="682.30" y="460.7" width="1963.30" height="2.2" fill="#566178"/><rect x="682.30" y="461" width="2" height="10.6" fill="#5b667a"/><rect x="843.18" y="461" width="2" height="10.6" fill="#5b667a"/><rect x="1004.06" y="461" width="2" height="10.6" fill="#5b667a"/><rect x="1164.94" y="461" width="2" height="10.6" fill="#5b667a"/><rect x="1325.82" y="461" width="2" height="10.6" fill="#5b667a"/><rect x="1486.70" y="461" width="2" height="10.6" fill="#5b667a"/><rect x="1647.58" y="461" width="2" height="10.6" fill="#5b667a"/><rect x="1808.46" y="461" width="2" height="10.6" fill="#5b667a"/><rect x="1969.34" y="461" width="2" height="10.6" fill="#5b667a"/><rect x="2130.22" y="461" width="2" height="10.6" fill="#5b667a"/><rect x="2291.10" y="461" width="2" height="10.6" fill="#5b667a"/><rect x="2451.98" y="461" width="2" height="10.6" fill="#5b667a"/><rect x="2612.86" y="461" width="2" height="10.6" fill="#5b667a"/></svg>
<div class="t" style="left:665.43px;top:167.00px;font-size:20px;line-height:20px;color:#1c2b34;">8</div>
<div class="t" style="left:665.28px;top:238.00px;font-size:20px;line-height:20px;color:#1c2b34;">6</div>
<div class="t" style="left:665.84px;top:309.00px;font-size:20px;line-height:20px;color:#1c2b34;">4</div>
<div class="t" style="left:665.29px;top:380.00px;font-size:20px;line-height:20px;color:#1c2b34;">2</div>
<div class="t" style="left:665.52px;top:451.00px;font-size:20px;line-height:20px;color:#1c2b34;">0</div>
<div class="t" style="left:979.48px;top:474.80px;font-size:20px;line-height:20px;color:#1c2b34;letter-spacing:0.252px;">18:29</div>
<div class="t" style="left:2462.27px;top:196.40px;font-size:24.72px;line-height:24.72px;color:#f2139a;letter-spacing:0.634px;">Deployment</div>
<div class="b" style="left:683px;top:529px;width:22px;height:22px;background:#97c9fc;border-radius:4.5px;"></div>
<div class="t" style="left:716.65px;top:529.20px;font-size:22.66px;line-height:22.66px;color:#1c2b34;letter-spacing:0.363px;">gcp-staging-sandbox</div>
<div class="b" style="left:966px;top:529px;width:22px;height:22px;background:#3397ea;border-radius:4.5px;"></div>
<div class="t" style="left:999.14px;top:529.20px;font-size:22.66px;line-height:22.66px;color:#1c2b34;letter-spacing:0.466px;">Paul's test|v1</div>
<div class="b" style="left:1172.1px;top:529px;width:22px;height:22px;background:#d7c3fc;border-radius:4.5px;"></div>
<div class="t" style="left:1205.30px;top:530.20px;font-size:22px;line-height:22px;color:#1c2b34;letter-spacing:1.438px;">N/A</div>
<div class="b" style="left:1276.8px;top:529px;width:22px;height:22px;background:#7563df;border-radius:4.5px;"></div>
<div class="t" style="left:1311.72px;top:529.20px;font-size:22.66px;line-height:22.66px;color:#1c2b34;letter-spacing:0.780px;">void-config|v1</div>
<div class="b" style="left:581px;top:616px;width:2105px;height:2px;background:#e2e5ee;"></div>
<div class="b" style="left:581px;top:618px;width:2105px;height:320px;background:#f8f9fb;"></div>
<div class="b" style="left:581px;top:938px;width:2105px;height:2px;background:#e2e5ee;"></div>
<div class="t" style="left:613.46px;top:657.60px;font-size:24px;line-height:24px;color:#5a6874;font-weight:700;transform:scaleX(0.8976);transform-origin:0 0;">TYPE</div>
<div class="t" style="left:870.15px;top:655.90px;font-size:26.78px;line-height:26.78px;color:#1c2b34;letter-spacing:0.630px;">Agent Configuration</div>
<div class="t" style="left:613.07px;top:710.00px;font-size:24px;line-height:24px;color:#5a6874;font-weight:700;transform:scaleX(0.9076);transform-origin:0 0;">STARTED</div>
<div class="t" style="left:869.75px;top:707.60px;font-size:26.78px;line-height:26.78px;color:#1c2b34;letter-spacing:0.008px;">0 seconds ago</div>
<div class="t" style="left:1058.70px;top:707.60px;font-size:26.78px;line-height:26.78px;color:#8b959d;letter-spacing:0.096px;">May 14, 2025, 6:29 pm</div>
<div class="t" style="left:612.09px;top:761.70px;font-size:24px;line-height:24px;color:#5a6874;font-weight:700;letter-spacing:-0.052px;">ENDED ON</div>
<div class="t" style="left:868.13px;top:759.40px;font-size:26.78px;line-height:26.78px;color:#0065c6;letter-spacing:0.255px;">In Progress...</div>
<div class="t" style="left:612.21px;top:820.00px;font-size:24px;line-height:24px;color:#5a6874;font-weight:700;transform:scaleX(0.9290);transform-origin:0 0;">DEPLOYED BY</div>
<svg class="b" style="left:870px;top:806px;" width="48" height="48" viewBox="0 0 10 10"><defs><clipPath id="avv870806"><circle cx="5" cy="5" r="5"/></clipPath></defs><g clip-path="url(#avv870806)"><rect width="10" height="10" fill="#06ab0c"/><g fill="#5ce1c6"><rect x="4" y="1" width="2.02" height="2.02"/><rect x="3" y="3" width="1.02" height="2.02"/><rect x="6" y="3" width="1.02" height="2.02"/><rect x="1" y="5" width="8.02" height="2.02"/><rect x="1" y="7" width="2.02" height="1.02"/><rect x="7" y="7" width="2.02" height="1.02"/><rect x="3" y="8" width="1.02" height="1.02"/><rect x="6" y="8" width="1.02" height="1.02"/></g></g></svg>
<div class="t" style="left:933.69px;top:819.70px;font-size:24.72px;line-height:24.72px;color:#1c2b34;letter-spacing:0.195px;">Vignesh Palaniappan</div>
<div class="t" style="left:612.65px;top:877.30px;font-size:24px;line-height:24px;color:#5a6874;font-weight:700;transform:scaleX(0.9210);transform-origin:0 0;">AGENT SCOPE</div>
<div class="b" style="left:863.7px;top:873.2px;width:92.9px;height:31.2px;box-sizing:border-box;border:2px solid #dfe2ef;border-radius:6px;background:#f1f1f3;"></div>
<div class="t" style="left:871.3px;top:881.20px;font-size:18px;line-height:20px;letter-spacing:0.3px;font-family:'Liberation Mono',monospace;color:#1c2b34">env<span style="color:#c8199b">:</span><span style="color:#1a2a7c">dev</span></div>
<svg class="b" style="left:966px;top:876px;" width="26" height="26" viewBox="966 876 26 26"><g fill="none" stroke="#5e6872" stroke-width="1.8"><rect x="970.2" y="885.5" width="11.8" height="11.6"/><path d="M973.8,881.6 H986.2 V894"/></g></svg>
<svg class="b" style="left:1004px;top:876px;" width="26" height="26" viewBox="1004 876 26 26"><g fill="none" stroke="#5e6872" stroke-width="1.8"><path d="M1014.5,881.6 H1008 V897 H1022.4 V889.8"/><path d="M1014.8,890.2 L1024,881 M1016.6,881.6 H1023.8 V886.4"/></g></svg>
<div class="t" style="left:611.63px;top:995.10px;font-size:30.9px;line-height:30.9px;color:#1c2b34;font-weight:700;letter-spacing:0.021px;">Deployed Configuration</div>
<div class="b" style="left:613px;top:1061px;width:2042.6px;height:445px;box-sizing:border-box;border:2px solid #e0e3ed;border-radius:9px;background:#fff;"></div>
<svg class="b" style="left:647.9px;top:1097.9px;" width="30" height="30" viewBox="-15 -15 30 30"><defs><mask id="gm1"><rect x="-15" y="-15" width="30" height="30" fill="#fff"/><circle r="5.00" fill="#000"/></mask></defs><g fill="#69737d" mask="url(#gm1)"><polygon points="-3.10,-13.00 3.10,-13.00 4.10,-8.60 -4.10,-8.60" transform="rotate(0)"/><polygon points="-3.10,-13.00 3.10,-13.00 4.10,-8.60 -4.10,-8.60" transform="rotate(60)"/><polygon points="-3.10,-13.00 3.10,-13.00 4.10,-8.60 -4.10,-8.60" transform="rotate(120)"/><polygon points="-3.10,-13.00 3.10,-13.00 4.10,-8.60 -4.10,-8.60" transform="rotate(180)"/><polygon points="-3.10,-13.00 3.10,-13.00 4.10,-8.60 -4.10,-8.60" transform="rotate(240)"/><polygon points="-3.10,-13.00 3.10,-13.00 4.10,-8.60 -4.10,-8.60" transform="rotate(300)"/><circle r="9.80"/></g></svg>
<div class="t" style="left:695.10px;top:1101.20px;font-size:26.78px;line-height:26.78px;color:#1c2b34;font-weight:700;">Tier 2 Configuration</div>
<div class="t" style="left:646.77px;top:1157.80px;font-size:22.66px;line-height:22.66px;color:#5a6874;font-weight:700;letter-spacing:-0.122px;">Created by:</div>
<svg class="b" style="left:785px;top:1147.2px;" width="40" height="40" viewBox="0 0 10 10"><defs><clipPath id="avv7851147"><circle cx="5" cy="5" r="5"/></clipPath></defs><g clip-path="url(#avv7851147)"><rect width="10" height="10" fill="#06ab0c"/><g fill="#5ce1c6"><rect x="4" y="1" width="2.02" height="2.02"/><rect x="3" y="3" width="1.02" height="2.02"/><rect x="6" y="3" width="1.02" height="2.02"/><rect x="1" y="5" width="8.02" height="2.02"/><rect x="1" y="7" width="2.02" height="1.02"/><rect x="7" y="7" width="2.02" height="1.02"/><rect x="3" y="8" width="1.02" height="1.02"/><rect x="6" y="8" width="1.02" height="1.02"/></g></g></svg>
<div class="t" style="left:841.10px;top:1157.80px;font-size:22.66px;line-height:22.66px;color:#1c2b34;letter-spacing:0.162px;">Vignesh Palaniappan</div>
<div class="t" style="left:1072.45px;top:1157.80px;font-size:22.66px;line-height:22.66px;color:#5d6b78;letter-spacing:0.112px;">on May 14, 2025, 6:27 pm</div>
<div class="t" style="left:2323.28px;top:1110.70px;font-size:26.78px;line-height:26.78px;color:#0065c6;letter-spacing:0.484px;">View Configuration</div>
<svg class="b" style="left:2564px;top:1106px;" width="40" height="34" viewBox="2564 1106 40 34"><path d="M2569,1123 H2597 M2585.6,1111.2 L2597.6,1123 L2585.6,1134.8" fill="none" stroke="#0065c6" stroke-width="2.4"/></svg>
<div class="b" style="left:615px;top:1219px;width:2038.6px;height:2px;background:#e0e3ed;"></div>
<div class="t" style="left:646.62px;top:1265.30px;font-size:26.78px;line-height:26.78px;color:#1c2b34;font-weight:700;transform:scaleX(0.9813);transform-origin:0 0;">Configured Products</div>
<div class="b" style="left:1122px;top:1253px;width:137.7px;height:47.6px;box-sizing:border-box;border:2px solid #bcc3dc;border-radius:0 8px 8px 0;background:#fff;"></div>
<div class="b" style="left:940px;top:1253px;width:184px;height:47.6px;box-sizing:border-box;border:2px solid #0667c5;border-radius:8px 0 0 8px;background:#eaf5fc;"></div>
<svg class="b" style="left:956px;top:1262px;" width="32" height="30" viewBox="956 1262 32 30"><rect x="960.2" y="1267.1000000000001" width="4.3" height="4.2" fill="#0858c5"/><rect x="967.9" y="1268.1000000000001" width="16.2" height="2.2" fill="#0858c5"/><rect x="960.2" y="1275.2" width="4.3" height="4.2" fill="#0858c5"/><rect x="967.9" y="1276.2" width="16.2" height="2.2" fill="#0858c5"/><rect x="960.2" y="1283.3000000000002" width="4.3" height="4.2" fill="#0858c5"/><rect x="967.9" y="1284.3000000000002" width="16.2" height="2.2" fill="#0858c5"/></svg>
<div class="t" style="left:997.18px;top:1266.10px;font-size:24.72px;line-height:24.72px;color:#0858c5;letter-spacing:0.468px;">Summary</div>
<svg class="b" style="left:1136px;top:1262px;" width="36" height="30" viewBox="1136 1262 36 30"><g fill="none" stroke="#5e6872" stroke-width="2"><path d="M1147.6,1270.6 L1141.2,1277.3 L1147.6,1284"/><path d="M1160.8,1270.6 L1167.2,1277.3 L1160.8,1284"/><path d="M1156.7,1267 L1151.9,1287.4"/></g></svg>
<div class="t" style="left:1179.68px;top:1266.10px;font-size:24px;line-height:24px;color:#1c2b34;transform:scaleX(0.9812);transform-origin:0 0;">YAML</div>
<div class="b" style="left:647px;top:1333px;width:1974.4px;height:139px;box-sizing:border-box;border:2px solid #e0e3ed;background:#fff;"></div>
<svg class="b" style="left:666px;top:1356px;" width="30" height="24" viewBox="666 1356 30 24"><path d="M671.2,1363 L681,1372.8 L690.8,1363" fill="none" stroke="#5e6872" stroke-width="2.3"/></svg>
<svg class="b" style="left:716px;top:1350px;" width="42" height="36" viewBox="716 1350 42 36"><path d="M721.2,1363.9 H732.6 L736.4,1356 L740.4,1369.6 L744.6,1363.9 H752.9" fill="none" stroke="#5e6872" stroke-width="2.1" stroke-linejoin="miter"/><rect x="721.2" y="1373.5" width="4.9" height="2.4" fill="#5e6872"/><rect x="729.2" y="1373.5" width="10.5" height="2.4" fill="#5e6872"/><rect x="742.2" y="1373.5" width="3.8" height="2.4" fill="#5e6872"/><rect x="749.1" y="1373.5" width="3.8" height="2.4" fill="#5e6872"/><rect x="721.2" y="1378.6" width="4.9" height="2.4" fill="#5e6872"/><rect x="729.2" y="1378.6" width="10.5" height="2.4" fill="#5e6872"/><rect x="742.2" y="1378.6" width="3.8" height="2.4" fill="#5e6872"/><rect x="749.1" y="1378.6" width="3.8" height="2.4" fill="#5e6872"/></svg>
<div class="t" style="left:769.00px;top:1355.30px;font-size:26.78px;line-height:26.78px;color:#1c2b34;letter-spacing:0.318px;">Live Process Monitoring</div>
<div class="b" style="left:2324.6px;top:1344.2px;width:279.2px;height:47px;box-sizing:border-box;border:2px solid #dfe2ec;border-radius:24px;background:#fff;"></div>
<div class="t" style="left:2340.47px;top:1357.20px;font-size:24.72px;line-height:24.72px;color:#1c2b34;letter-spacing:0.714px;">Default Configuration</div>
<div class="b" style="left:713px;top:1418px;width:64px;height:36px;border-radius:18px;background:#b1bfe9;"></div>
<div class="b" style="left:746.9px;top:1424px;width:24px;height:24px;border-radius:12px;background:#f0f1f5;"></div>
<div class="t" style="left:790.80px;top:1424.20px;font-size:26.78px;line-height:26.78px;color:#1c2b34;letter-spacing:0.318px;">Live Process Monitoring</div>
</div></div>
<div class="b" style="left:580px;top:0;width:1px;height:1524px;background:rgba(0,0,0,.035)"></div>
<div id="fade"></div>
</body></html>
